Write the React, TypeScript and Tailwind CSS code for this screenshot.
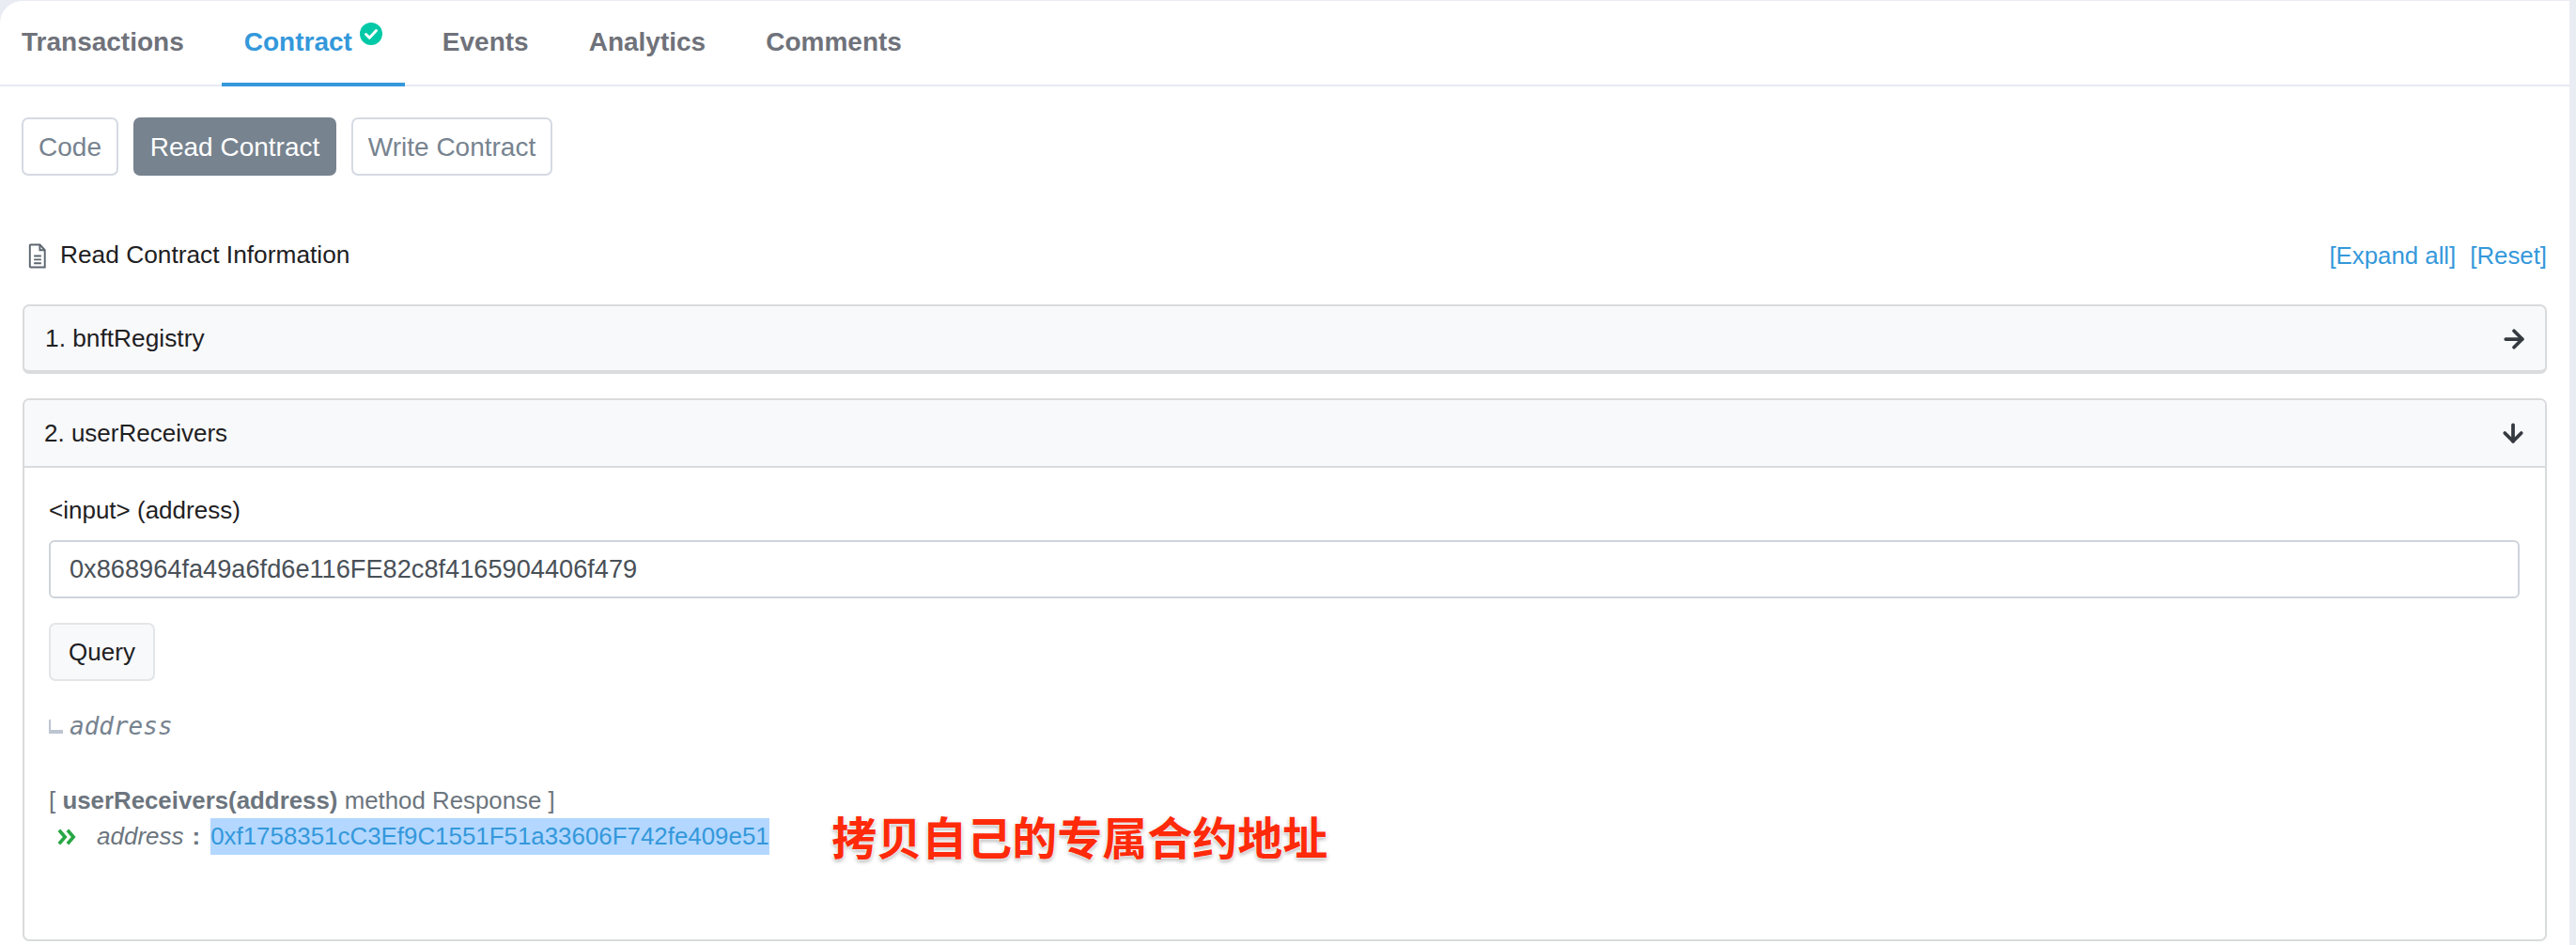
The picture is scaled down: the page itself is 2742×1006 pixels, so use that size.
import React from 'react';
import { ArrowRight, ArrowDown } from 'lucide-react';

const tabs = ['Transactions', 'Contract', 'Events', 'Analytics', 'Comments'];

const CheckBadge = () => (
  <svg viewBox="0 0 24 24" className="w-[24px] h-[24px] ml-[8px] -mt-[18px]">
    <circle cx="12" cy="12" r="12" fill="#00c9a7" />
    <path d="M6.5 12.5l3.8 3.8 7.2-7.8" fill="none" stroke="#fff" strokeWidth="3" strokeLinecap="round" strokeLinejoin="round" />
  </svg>
);

const DocIcon = () => (
  <svg viewBox="0 0 20 28" className="w-[20px] h-[27px] text-[#5c6670]" fill="none" stroke="currentColor" strokeWidth="2">
    <path d="M2.5 1.5h10l5.5 6v19H2.5a1 1 0 0 1-1-1v-23a1 1 0 0 1 1-1z" />
    <path d="M12.5 1.5v6H18" />
    <path d="M6 14h8M6 18h8M6 22h8" />
  </svg>
);

export default function App() {
  return (
    <div className="min-h-[1006px] bg-[#e9ecf3] pt-px pr-[7px] font-['Liberation_Sans',sans-serif]">
      <div className="bg-white rounded-tl-[24px] h-[1005px]">
        <div className="flex gap-[16px] h-[91px] border-b-2 border-[#e7eaf3]">
          {tabs.map((t) => {
            const active = t === 'Contract';
            return (
              <div
                key={t}
                className={`flex items-center h-[91px] px-[24px] text-[28px] font-bold first:pl-[23px] first:pr-[24px] border-b-[4px] ${active ? 'border-[#3498db] text-[#3498db]' : 'border-transparent text-[#6f727a]'}`}
              >
                {t}
                {active && <CheckBadge />}
              </div>
            );
          })}
        </div>

        <div className="px-[24px]">
          <div className="flex gap-[16px] mt-[33px] -ml-px">
            <button className="h-[62px] w-[103px] pt-px rounded-[7px] border-2 border-[#d5dae2] text-[28px] text-[#77838f]">Code</button>
            <button className="h-[62px] w-[216px] pt-px rounded-[7px] bg-[#77838f] text-[28px] text-white">Read Contract</button>
            <button className="h-[62px] w-[214px] pt-px rounded-[7px] border-2 border-[#d5dae2] text-[28px] text-[#77838f]">Write Contract</button>
          </div>

          <div className="flex items-center justify-between mt-[70px] h-[30px]">
            <div className="flex items-center gap-[14px] pl-[6px] text-[26.3px] text-[#1e2022]">
              <DocIcon />
              <span>Read Contract Information</span>
            </div>
            <div className="flex gap-[15px] text-[25.8px] text-[#3498db]">
              <span>[Expand all]</span>
              <span>[Reset]</span>
            </div>
          </div>

          <div className="mt-[37px] h-[74px] rounded-[7px] border-2 border-b-4 border-[#dadbdd] bg-[#f8f9fa] flex items-center justify-between pl-[22px] pr-[18px] pt-[2px] text-[26.3px] text-[#1e2022]">
            <span>1. bnftRegistry</span>
            <ArrowRight className="w-[30px] h-[30px] text-[#343a40]" strokeWidth={3} />
          </div>

          <div className="mt-[26px] h-[578px] rounded-[7px] border-2 border-[#dadbdd]">
            <div className="h-[72px] bg-[#f8f9fa] border-b-2 border-[#dadbdd] rounded-t-[5px] flex items-center justify-between pl-[21px] pr-[19px] text-[26px] text-[#1e2022]">
              <span>2. userReceivers</span>
              <ArrowDown className="w-[30px] h-[30px] text-[#343a40]" strokeWidth={3} />
            </div>
            <div className="px-[26px] pt-[29px]">
              <div className="text-[26px] leading-[32px] text-[#1e2022]">&lt;input&gt; (address)</div>
              <div className="mt-[16px] h-[62px] rounded-[6px] border-2 border-[#ced4da] flex items-center pl-[20px] text-[27.2px] text-[#495057] mr-[1px]">
                0x868964fa49a6fd6e116FE82c8f4165904406f479
              </div>
              <button className="mt-[26px] block h-[62px] w-[113px] rounded-[7px] border-2 border-[#e3e5e8] bg-[#f8f9fa] text-[26px] text-[#1e2022]">Query</button>
              <div className="mt-[31px] flex items-center h-[34px]">
                <span className="w-[15px] h-[15px] border-l-2 border-b-[4px] border-[#bdc5d1] mr-[7px]" />
                <span className="font-['DejaVu_Sans_Mono',monospace] italic text-[26px] text-[#77838f]">address</span>
              </div>
              <div className="mt-[46px] text-[25.85px] leading-[32px] text-[#6c757e]">
                [ <b>userReceivers(address)</b> method Response ]
              </div>
              <div className="flex items-center mt-[3px] h-[39px]">
                <svg viewBox="0 0 24 20" className="w-[22px] h-[18px] ml-[8px] text-[#28a745]" fill="none" stroke="currentColor" strokeWidth="4">
                  <path d="M3 2l7 8-7 8M13 2l7 8-7 8" />
                </svg>
                <i className="ml-[21px] text-[26px] text-[#6c757e]">address</i>
                <b className="ml-[9px] text-[26px] text-[#6c757e]">:</b>
                <span className="ml-[11px] h-[39px] w-[595px] bg-[#b3d7ff] text-[25.9px] leading-[39px] text-[#3498db] whitespace-nowrap">0xf1758351cC3Ef9C1551F51a33606F742fe409e51</span>
                <span className="ml-[66px] -mt-[3px] font-['Noto_Sans_CJK_SC',sans-serif] font-bold text-[48px] leading-[48px] text-[#ff2a0a] whitespace-nowrap [text-shadow:0_0_3px_#fff,0_0_3px_#fff,0_2px_4px_#999]">拷贝自己的专属合约地址</span>
              </div>
            </div>
          </div>
        </div>
      </div>
    </div>
  );
}
